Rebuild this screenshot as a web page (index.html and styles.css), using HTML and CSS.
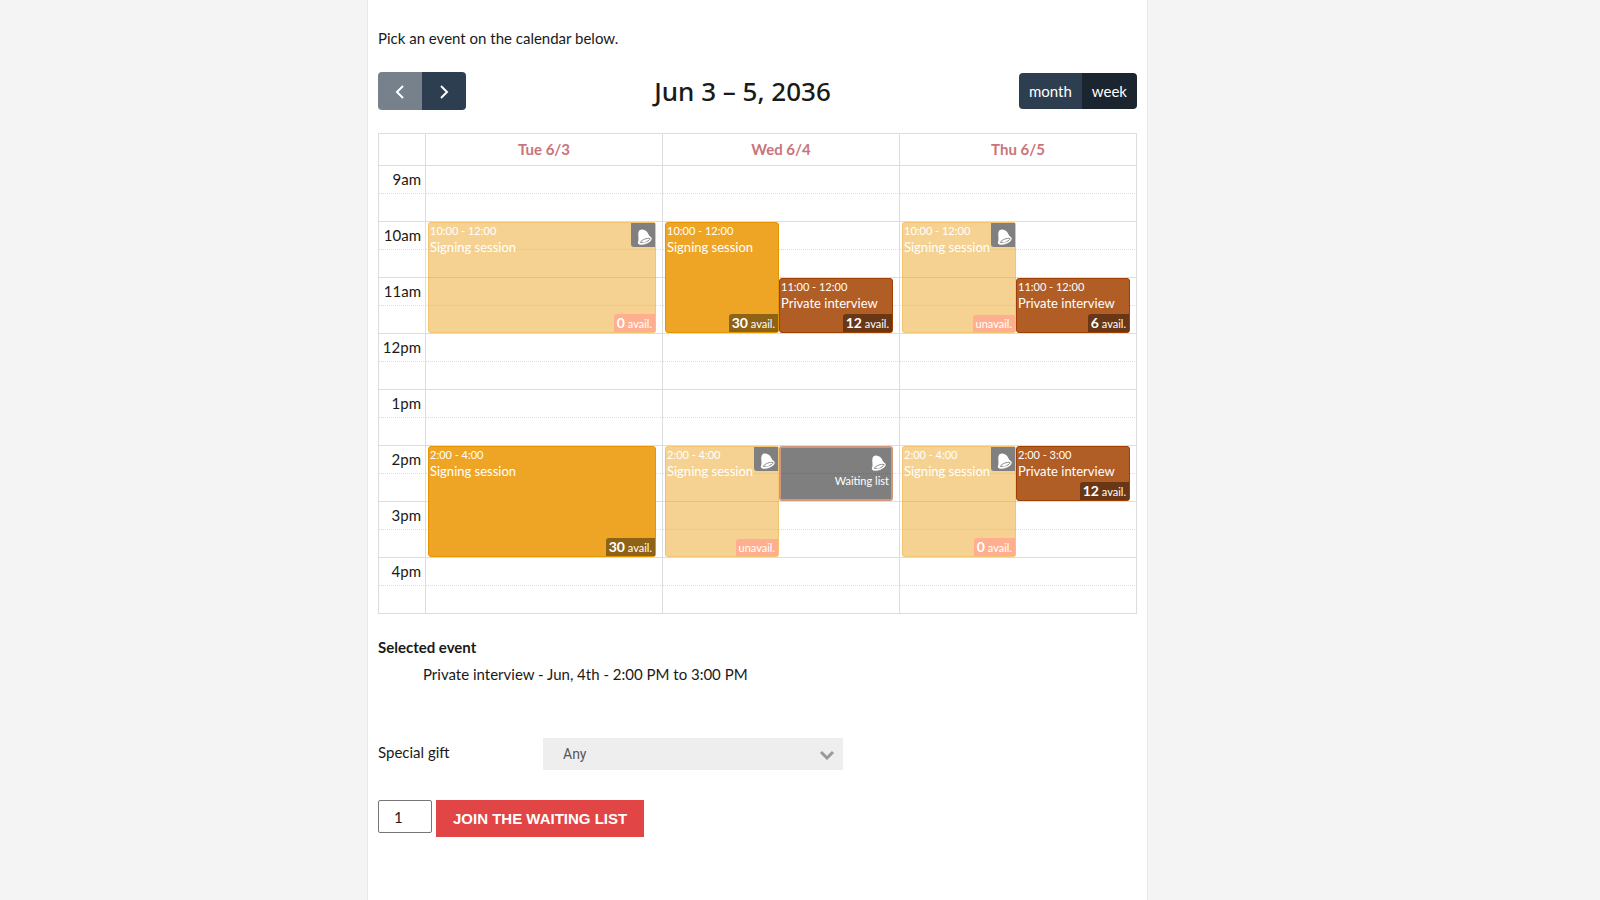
FILE: index.html
```html
<!DOCTYPE html>
<html lang="en">
<head>
    <meta charset="UTF-8">
    <meta name="viewport" content="width=device-width, initial-scale=1.0">
    <title>Pick an event</title>
    <link rel="stylesheet" href="styles.css">
</head>
<body>
    <svg class="sprite" aria-hidden="true">
        <symbol id="bell" viewBox="0 0 16 16">
            <path fill="#fff" d="M2.500 3.200C3 1.300 4.300.5 6.200.6c2.800.2 4.800 1.800 6 4.200.6 1.300 1.100 2.300 2.500 3.300.8.5 1.200 1.200 1 2-.5 1.900-2.600 3.700-5.200 4.600-2.400.9-5.300 1.200-7.200.7-1.200-.3-1.700-1.100-1.400-2.100.7-2 .7-3.400.5-5.300-.2-1.700-.3-3.300.1-4.800z"/>
            <path fill="none" stroke="#808080" stroke-width=".9" d="M4.200 13.300c1.200-2.200 7.200-4.900 9.900-3.700-.1 2-5.800 4.600-9.900 3.700z"/>
            <ellipse fill="#fff" cx="8.400" cy="12.300" rx="2" ry="1.100" transform="rotate(-20 8.400 12.300)"/>
        </symbol>
    </svg>

    <main class="page">
        <p class="intro">Pick an event on the calendar below.</p>

        <div class="toolbar">
            <div class="btn-group">
                <button type="button" class="btn btn-nav" aria-label="Previous" disabled>
                    <svg width="10" height="16" viewBox="0 0 10 16"><path d="M8 3 2 9l6 6"/></svg>
                </button>
                <button type="button" class="btn btn-nav" aria-label="Next">
                    <svg width="10" height="16" viewBox="0 0 10 16"><path d="m2 3 6 6-6 6"/></svg>
                </button>
            </div>
            <h2>Jun 3 – 5, 2036</h2>
            <div class="btn-group">
                <button type="button" class="btn">month</button>
                <button type="button" class="btn active">week</button>
            </div>
        </div>

        <div class="calendar">
            <table>
                <thead>
                    <tr>
                        <th class="axis"></th>
                        <th>Tue 6/3</th>
                        <th>Wed 6/4</th>
                        <th>Thu 6/5</th>
                    </tr>
                </thead>
                <tbody>
                    <tr><td class="axis">9am</td><td></td><td></td><td></td></tr>
                    <tr><td class="axis"></td><td></td><td></td><td></td></tr>
                    <tr><td class="axis">10am</td><td></td><td></td><td></td></tr>
                    <tr><td class="axis"></td><td></td><td></td><td></td></tr>
                    <tr><td class="axis">11am</td><td></td><td></td><td></td></tr>
                    <tr><td class="axis"></td><td></td><td></td><td></td></tr>
                    <tr><td class="axis">12pm</td><td></td><td></td><td></td></tr>
                    <tr><td class="axis"></td><td></td><td></td><td></td></tr>
                    <tr><td class="axis">1pm</td><td></td><td></td><td></td></tr>
                    <tr><td class="axis"></td><td></td><td></td><td></td></tr>
                    <tr><td class="axis">2pm</td><td></td><td></td><td></td></tr>
                    <tr><td class="axis"></td><td></td><td></td><td></td></tr>
                    <tr><td class="axis">3pm</td><td></td><td></td><td></td></tr>
                    <tr><td class="axis"></td><td></td><td></td><td></td></tr>
                    <tr><td class="axis">4pm</td><td></td><td></td><td></td></tr>
                    <tr><td class="axis"></td><td></td><td></td><td></td></tr>
                </tbody>
            </table>

            <div class="events">
                <div class="day">
                    <a href="#" class="event signing full wide from-10 two-hours">
                        <span class="time">10:00 - 12:00</span>
                        <span class="title">Signing session</span>
                        <svg class="bell"><use href="#bell"/></svg>
                        <span class="avail"><b>0</b> avail.</span>
                    </a>
                    <a href="#" class="event signing wide from-14 two-hours">
                        <span class="time">2:00 - 4:00</span>
                        <span class="title">Signing session</span>
                        <span class="avail"><b>30</b> avail.</span>
                    </a>
                </div>
                <div class="day">
                    <a href="#" class="event signing from-10 two-hours">
                        <span class="time">10:00 - 12:00</span>
                        <span class="title">Signing session</span>
                        <span class="avail"><b>30</b> avail.</span>
                    </a>
                    <a href="#" class="event interview from-11">
                        <span class="time">11:00 - 12:00</span>
                        <span class="title">Private interview</span>
                        <span class="avail"><b>12</b> avail.</span>
                    </a>
                    <a href="#" class="event signing full from-14 two-hours">
                        <span class="time">2:00 - 4:00</span>
                        <span class="title">Signing session</span>
                        <svg class="bell"><use href="#bell"/></svg>
                        <span class="avail">unavail.</span>
                    </a>
                    <a href="#" class="event waiting from-14">
                        <svg class="bell"><use href="#bell"/></svg>
                        <span>Waiting list</span>
                    </a>
                </div>
                <div class="day">
                    <a href="#" class="event signing full from-10 two-hours">
                        <span class="time">10:00 - 12:00</span>
                        <span class="title">Signing session</span>
                        <svg class="bell"><use href="#bell"/></svg>
                        <span class="avail">unavail.</span>
                    </a>
                    <a href="#" class="event interview from-11">
                        <span class="time">11:00 - 12:00</span>
                        <span class="title">Private interview</span>
                        <span class="avail"><b>6</b> avail.</span>
                    </a>
                    <a href="#" class="event signing full from-14 two-hours">
                        <span class="time">2:00 - 4:00</span>
                        <span class="title">Signing session</span>
                        <svg class="bell"><use href="#bell"/></svg>
                        <span class="avail"><b>0</b> avail.</span>
                    </a>
                    <a href="#" class="event interview from-14">
                        <span class="time">2:00 - 3:00</span>
                        <span class="title">Private interview</span>
                        <span class="avail"><b>12</b> avail.</span>
                    </a>
                </div>
            </div>
        </div>

        <dl class="selected">
            <dt>Selected event</dt>
            <dd>Private interview - Jun, 4th - 2:00 PM to 3:00 PM</dd>
        </dl>

        <form>
            <div class="field">
                <label for="gift">Special gift</label>
                <div class="select">
                    <select id="gift" name="gift">
                        <option>Any</option>
                    </select>
                    <svg width="16" height="10" viewBox="0 0 16 10"><path d="m2 2 6 6 6-6"/></svg>
                </div>
            </div>
            <div class="actions">
                <input type="text" inputmode="numeric" name="quantity" value="1" aria-label="Quantity">
                <button type="submit" class="submit-btn">JOIN THE WAITING LIST</button>
            </div>
        </form>
    </main>
</body>
</html>
```
FILE: styles.css
```css
* {
    box-sizing: border-box;
}

body {
    margin: 0;
    background: #f4f4f4;
    color: #1a1a1a;
    font-family: Lato, sans-serif;
    font-size: 15px;
    line-height: 24px;
}

.sprite {
    position: absolute;
    width: 0;
    height: 0;
}

.page {
    max-width: 781px;
    min-height: 100vh;
    margin-left: max(0px, 50% - 433px);
    padding: 26px 10px;
    background: #fff;
    border: solid #e8e8e8;
    border-width: 0 1px;
}

.intro {
    margin: 0 0 22px;
}

/* Toolbar */
.toolbar {
    display: flex;
    align-items: center;
    justify-content: space-between;
    margin-bottom: 23px;
}

h2 {
    margin: 0;
    font: 500 26px/38px "Noto Sans", sans-serif;
}

.btn-group {
    display: flex;
    border-radius: 4px;
    overflow: hidden;
}

.btn {
    height: 36px;
    padding: 0 10px;
    border: 0;
    background: #2c3e50;
    color: #fff;
    font: 15px Lato, sans-serif;
}

.btn.active {
    background: #1a252f;
}

.btn-nav {
    display: flex;
    align-items: center;
    justify-content: center;
    width: 44px;
    height: 38px;
}

.btn-nav:disabled {
    background: #77818c;
}

.btn svg {
    fill: none;
    stroke: #fff;
    stroke-width: 2;
}

/* Calendar */
.calendar {
    position: relative;
}

table {
    width: 100%;
    table-layout: fixed;
    border-spacing: 0;
    border: solid #ddd;
    border-width: 1px 0 0 1px;
}

th,
td {
    height: 28px;
    padding: 0 0 2px;
    border: solid #ddd;
    border-width: 0 1px 1px 0;
}

th {
    height: 32px;
    color: #c9747a;
}

tbody tr:nth-child(odd) td {
    border-bottom-style: dotted;
}

.axis {
    width: 47px;
    padding-right: 4px;
    text-align: right;
}

.events {
    position: absolute;
    inset: 33px 0 0 48px;
    display: grid;
    grid-template-columns: repeat(3, 1fr);
}

/* one row per half hour, from 9am */
.day {
    display: grid;
    grid-template-rows: repeat(16, 28px);
    grid-template-columns: 1fr 1fr;
    padding: 0 7px 0 2px;
}

.event {
    position: relative;
    grid-row-end: span 2;
    margin-bottom: 1px;
    padding: 0 1px;
    border: 1px solid;
    border-radius: 3px;
    color: #fff;
    font-size: 11px;
    line-height: 16px;
    text-decoration: none;
    white-space: nowrap;
}

.from-10 { grid-row-start: 3; }
.from-11 { grid-row-start: 5; }
.from-14 { grid-row-start: 11; }
.two-hours { grid-row-end: span 4; }

.signing {
    grid-column: 1;
    background: #eea526;
    border-color: #e69500;
}

.interview,
.waiting {
    grid-column: 2;
}

.interview {
    background: #b05d26;
    border-color: #a04000;
}

.wide {
    grid-column: 1 / -1;
}

.full {
    background: rgba(238, 165, 38, 0.5);
    border-color: rgba(238, 165, 38, 0.3);
}

.time,
.title {
    display: block;
}

.title {
    font-size: 13px;
}

.avail {
    position: absolute;
    right: 0;
    bottom: 0;
    padding: 0 3px;
    border-radius: 3px 0 0 0;
    background: rgba(0, 0, 0, 0.4);
    line-height: 17px;
}

.avail b {
    font-size: 14px;
}

.full .avail {
    background: #ffaf8f;
}

.bell {
    width: 24px;
    height: 24px;
    padding: 6px 3px 2px 5px;
}

.full .bell {
    position: absolute;
    top: 0;
    right: 0;
    background: #808080;
    border-radius: 0 0 0 3px;
}

.waiting {
    display: flex;
    flex-direction: column;
    align-items: flex-end;
    padding: 1px 2px;
    border: 2px solid #d0987a;
    background: rgba(0, 0, 0, 0.5);
}

/* Selection and form */
.selected {
    margin: 21px 0 0;
}

dt {
    font-weight: bold;
}

dd {
    margin: 3px 0 0 45px;
}

.field {
    display: grid;
    grid-template-columns: 165px 300px;
    align-items: center;
    margin: 52px 0 30px;
}

.field label {
    padding-bottom: 4px;
}

.select {
    position: relative;
}

.select select {
    appearance: none;
    display: block;
    width: 100%;
    height: 32px;
    padding: 0 20px;
    border: 0;
    border-radius: 0;
    background: #eee;
    color: #555;
    font: 14px Roboto, sans-serif;
}

.select svg {
    position: absolute;
    right: 8px;
    top: 12px;
    fill: none;
    stroke: #999;
    stroke-width: 3;
    pointer-events: none;
}

.actions {
    display: flex;
    align-items: flex-start;
    gap: 4px;
}

.actions input {
    width: 54px;
    height: 33px;
    padding: 0 15px;
    border: 1px solid #767676;
    border-radius: 2px;
    color: #1a1a1a;
    font: 15px Lato, sans-serif;
}

.submit-btn {
    height: 37px;
    padding: 0 17px;
    border: 0;
    background: #e14545;
    color: #fff;
    font: bold 15px "Liberation Sans", Arial, sans-serif;
}
```
